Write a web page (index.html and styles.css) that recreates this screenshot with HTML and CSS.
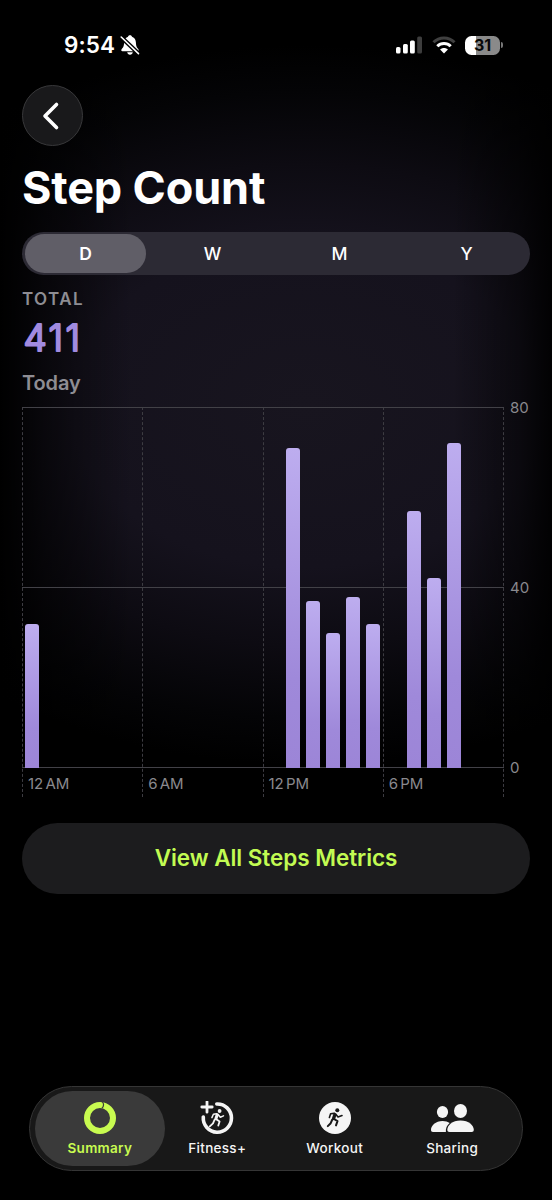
FILE: index.html
```html
<!DOCTYPE html>
<html lang="en">
<head>
    <meta charset="UTF-8">
    <meta name="viewport" content="width=device-width, initial-scale=1.0">
    <title>Step Count</title>
    <link rel="stylesheet" href="styles.css">
</head>
<body>
    <div class="screen">
        <!-- Status bar -->
        <div class="status-bar">
            <span class="time">9:54</span>
            <svg class="bell" width="20" height="22" viewBox="0 0 20 22">
                <path fill="#fff" d="M10 1.2c-1.2 0-1.9.7-2 1.6C5.2 3.7 4.2 6 4.1 8.5 4 12.5 3 13.6 1.6 15.2c-.7.9-.3 2 .8 2h15.2c1.100 0 1.5-1.1.8-2C17 13.6 16 12.5 15.9 8.5 15.8 6 14.8 3.7 12 2.8c-.1-.9-.8-1.6-2-1.6zM7.2 18.3h5.6c-.2 1.5-1.3 2.4-2.8 2.4s-2.6-.9-2.8-2.4z"/>
                <path stroke="#000" stroke-width="4.4" d="M0 2l19 18"/>
                <path stroke="#fff" stroke-width="1.6" stroke-linecap="round" d="M1.2 3l17.3 16.6"/>
            </svg>
            <div class="status-icons">
                <svg width="28" height="18" viewBox="0 0 28 18">
                    <g fill="#fff">
                        <rect x="1" y="11" width="4.5" height="6.5" rx="1.5"/>
                        <rect x="8" y="8" width="4.8" height="9.5" rx="1.5"/>
                        <rect x="15" y="4.5" width="4.8" height="13" rx="1.5"/>
                        <rect x="22.2" y="0.5" width="4.8" height="17" rx="1.5" opacity=".24"/>
                    </g>
                </svg>
                <svg class="wifi" width="24" height="18" viewBox="0 0 24 18">
                    <g fill="none" stroke="#fff" stroke-width="3">
                        <path opacity=".25" d="M1.5 6.3C7.3.5 16.7.5 22.5 6.3"/>
                        <path d="M5.300 10.2c3.7-3.7 9.7-3.7 13.4 0"/>
                    </g>
                    <path fill="#fff" d="M12 17.5l-3.9-3.9c2.2-2 5.6-2 7.8 0z"/>
                </svg>
                <div class="battery">31</div>
                <div class="battery-tip"></div>
            </div>
        </div>

        <button class="back-btn" aria-label="Back">
            <svg width="20" height="30" viewBox="0 0 20 30">
                <path d="M15.500 3.5L4 15l11.500 11.5" fill="none" stroke="#fff" stroke-width="3.6" stroke-linecap="round" stroke-linejoin="round"/>
            </svg>
        </button>

        <h1>Step Count</h1>

        <div class="segments">
            <button class="segment active">D</button>
            <button class="segment">W</button>
            <button class="segment">M</button>
            <button class="segment">Y</button>
        </div>

        <div class="total-label">TOTAL</div>
        <svg class="total-value" width="110" height="50" viewBox="0 0 110 50">
            <text x="1.5" y="37">411</text>
        </svg>
        <div class="total-date">Today</div>

        <!-- Hourly chart, filled in below -->
        <div class="chart">
            <div class="plot">
                <div class="columns">
                    <div class="column"><span>12 AM</span></div>
                    <div class="column"><span>6 AM</span></div>
                    <div class="column"><span>12 PM</span></div>
                    <div class="column"><span>6 PM</span></div>
                </div>
                <div class="bars" id="bars"></div>
            </div>
            <div class="y-axis">
                <span>80</span>
                <span>40</span>
                <span>0</span>
            </div>
        </div>

        <button class="metrics-btn">View All Steps Metrics</button>

        <!-- Tab bar -->
        <nav class="tab-bar">
            <a class="tab active">
                <svg width="34" height="34" viewBox="0 0 34 34">
                    <circle cx="17" cy="17" r="13" fill="none" stroke="#c8fb50" stroke-width="6"/>
                    <path d="M18.7.5c2.5 1.2 2.5 5.3 0 7" fill="none" stroke="#3a3a3a" stroke-width="1.2"/>
                </svg>
                <span>Summary</span>
            </a>
            <a class="tab">
                <svg width="34" height="34" viewBox="0 0 34 34">
                    <path d="M16.8 3A14.1 14.1 0 1 1 3.3 16" fill="none" stroke="#f5f5f5" stroke-width="3.6" stroke-linecap="round"/>
                    <path d="M7 .8v10.4M1.8 6h10.4" stroke="#f5f5f5" stroke-width="2.8" stroke-linecap="round"/>
                    <g transform="translate(1.3 .2)" fill="none" stroke="#f5f5f5" stroke-linecap="round" stroke-linejoin="round">
                        <circle cx="18.3" cy="9.8" r="1.9" fill="#f5f5f5" stroke="none"/>
                        <path stroke-width="1.5" d="M15.3 12.6l-3.2.5-1.5 3.3M17 13.5l2 2.5 3.2-1.3"/>
                        <path stroke-width="3" d="M15.9 13.5l-1.3 4"/>
                        <path stroke-width="1.8" d="M15 18l3.3 2.2-1.3 4.2M13.3 18.5l-1.6 3.7-3.2 2.9"/>
                    </g>
                </svg>
                <span>Fitness+</span>
            </a>
            <a class="tab">
                <svg width="34" height="34" viewBox="0 0 34 34">
                    <circle cx="17" cy="17" r="16" fill="#f5f5f5"/>
                    <g transform="translate(1 0)" fill="none" stroke="#181818" stroke-linecap="round" stroke-linejoin="round">
                        <circle cx="18.3" cy="9.2" r="2" fill="#181818" stroke="none"/>
                        <path stroke-width="1.6" d="M15.3 12.4l-3.7.4-1.2 3.6M17 13.5l2 2.5 4-1.5"/>
                        <path stroke-width="3.3" d="M15.9 13.5l-1.3 4"/>
                        <path stroke-width="2" d="M15 18l3.5 2.2-1.5 4.2M13.3 18.5l-1.6 3.7-2.9 2.9"/>
                    </g>
                </svg>
                <span>Workout</span>
            </a>
            <a class="tab">
                <svg width="44" height="34" viewBox="0 0 44 34">
                    <g fill="#f5f5f5">
                        <ellipse cx="12.5" cy="11" rx="5.6" ry="6.1"/>
                        <path d="M3 31c-1.3 0-2-.7-2-2 0-4.5 4.7-9 11.5-9 3 0 5.3.7 7.2 2-2.9 2.3-4.2 5.7-3.8 9z"/>
                        <ellipse cx="30.5" cy="10" rx="6.5" ry="7"/>
                        <path d="M19.5 31c-1.4 0-2.2-.8-2.2-2.2 0-4.4 5-9.3 13.2-9.3s13.3 4.9 13.3 9.3c0 1.4-.8 2.2-2.2 2.2z"/>
                    </g>
                </svg>
                <span>Sharing</span>
            </a>
        </nav>
    </div>

    <script>
        const MAX_STEPS = 80;
        // steps per hour, midnight to 11 PM
        const steps = [32, 0, 0, 0, 0, 0, 0, 0, 0, 0, 0, 0, 0, 71, 37, 30, 38, 32, 0, 57, 42, 72, 0, 0];

        document.getElementById('bars').innerHTML = steps.map(count =>
            `<div class="hour">${count ? `<div class="bar" style="height:${count / MAX_STEPS * 100}%"></div>` : ''}</div>`
        ).join('');
    </script>
</body>
</html>
```
FILE: styles.css
```css
* {
    box-sizing: border-box;
    margin: 0;
    padding: 0;
}

body {
    background: #000;
    color: #fff;
    font-family: Inter, "Liberation Sans", sans-serif;
}

button {
    border: none;
    font-family: inherit;
    color: inherit;
}

svg {
    display: block;
}

.screen {
    width: 552px;
    height: 1200px;
    padding: 0 22px;
    display: flex;
    flex-direction: column;
    background:
        linear-gradient(90deg, #000, rgba(0,0,0,0.55) 8%, transparent 24%, transparent 82%, rgba(0,0,0,0.5) 94%, rgba(0,0,0,0.9)),
        radial-gradient(ellipse 520px 360px at 305px 405px, #18151f 0%, #15121d 45%, #0d0b12 67%, #040406 87%, #000 100%);
}

/* Status bar */
.status-bar {
    height: 85px;
    padding: 5px 27px 0 42px;
    display: flex;
    align-items: center;
}

.time {
    margin-top: -1px;
    font-size: 22.5px;
    font-weight: 600;
    letter-spacing: 0.1px;
}

.bell {
    margin-left: 5px;
}

.status-icons {
    margin-left: auto;
    display: flex;
    align-items: center;
}

.wifi {
    margin: 0 9px 0 9px;
}

.battery {
    width: 35px;
    height: 19px;
    border-radius: 6.5px;
    background: linear-gradient(90deg, #fff 32%, #8a8a8a 32%);
    color: #080808;
    font-size: 16px;
    font-weight: 700;
    line-height: 19px;
    text-align: center;
}

.battery-tip {
    width: 2px;
    height: 6px;
    margin-left: 1px;
    border-radius: 0 2px 2px 0;
    background: #777;
}

.back-btn {
    width: 61px;
    height: 61px;
    flex-shrink: 0;
    border: 1px solid #38383a;
    border-radius: 50%;
    background: #19191b;
    display: flex;
    align-items: center;
    justify-content: center;
    padding-right: 4px;
}

h1 {
    margin-top: 12px;
    height: 60px;
    line-height: 60px;
    font-size: 45px;
    font-weight: 700;
    letter-spacing: -0.15px;
}

/* D / W / M / Y */
.segments {
    margin-top: 14px;
    height: 43px;
    flex-shrink: 0;
    padding: 2px 3px;
    border-radius: 22px;
    background: #2c2a34;
    display: flex;
    justify-content: space-between;
}

.segment {
    width: 121px;
    border-radius: 20px;
    background: none;
    font-size: 17.5px;
    font-weight: 500;
}

.segment.active {
    background: #605e67;
    font-weight: 600;
}

.total-label {
    margin-top: 12px;
    line-height: 24px;
    font-size: 17px;
    font-weight: 600;
    letter-spacing: 1.4px;
    color: #8e8d93;
}

.total-value {
    margin-top: 3px;
}

.total-value text {
    font-size: 37px;
    font-weight: 300;
    letter-spacing: 2.4px;
    fill: #a18be0;
    stroke: #a18be0;
    stroke-width: 2.2px;
    stroke-linejoin: round;
}

.total-date {
    margin-top: 6px;
    line-height: 26px;
    font-size: 20px;
    font-weight: 600;
    letter-spacing: -0.1px;
    color: #8e8d93;
}

/* Chart */
.chart {
    margin-top: 11px;
    height: 390px;
    flex-shrink: 0;
    display: flex;
}

.plot {
    width: 482px;
    display: grid;
    grid-template-rows: 361px 29px;
}

.columns {
    grid-area: 1 / 1 / 3 / 2;
    display: grid;
    grid-template-columns: repeat(4, 1fr);
    border-right: 1px dashed #3d3c42;
}

.column {
    border-left: 1px dashed #3d3c42;
    display: flex;
    align-items: flex-end;
    padding: 0 0 3px 5px;
    font-size: 15px;
    line-height: 20px;
    word-spacing: -2px;
    color: #8a898e;
}

.bars {
    grid-area: 1 / 1 / 2 / 2;
    display: grid;
    grid-template-columns: repeat(24, 1fr);
    background:
        linear-gradient(#424147, #424147) 0 0 / 100% 1px no-repeat,
        linear-gradient(#424147, #424147) 0 180px / 100% 1px no-repeat,
        linear-gradient(#424147, #424147) 0 360px / 100% 1px no-repeat;
}

.hour {
    display: flex;
    align-items: flex-end;
    justify-content: center;
}

.bar {
    width: 14px;
    border-radius: 3px 3px 0 0;
    background: linear-gradient(#bdadef, #9f89da 72%, #9c85d7);
}

.y-axis {
    height: 380px;
    margin: -9px 0 0 6px;
    display: flex;
    flex-direction: column;
    justify-content: space-between;
    font-size: 15px;
    line-height: 20px;
    color: #8a898e;
}

.metrics-btn {
    margin-top: 26px;
    height: 71px;
    flex-shrink: 0;
    padding-bottom: 2px;
    border-radius: 36px;
    background: #1c1c1e;
    color: #c2fb52;
    font-size: 22.5px;
    font-weight: 600;
    letter-spacing: -0.05px;
}

/* Tab bar */
.tab-bar {
    margin: auto 7px 29px;
    height: 85px;
    flex-shrink: 0;
    padding: 0 5px;
    border: 1px solid #353535;
    border-radius: 43px;
    background: #181818;
    display: flex;
    align-items: center;
}

.tab {
    width: 130px;
    height: 75px;
    padding-top: 10px;
    border-radius: 38px;
    display: flex;
    flex-direction: column;
    align-items: center;
    font-size: 13.5px;
    font-weight: 500;
    letter-spacing: 0.3px;
    color: #f5f5f5;
}

.tab + .tab {
    margin-left: -12.3px;
}

.tab span {
    margin-top: 5px;
    line-height: 17px;
}

.tab.active {
    background: #3a3a3a;
    color: #c8fb50;
    font-weight: 600;
}
```
